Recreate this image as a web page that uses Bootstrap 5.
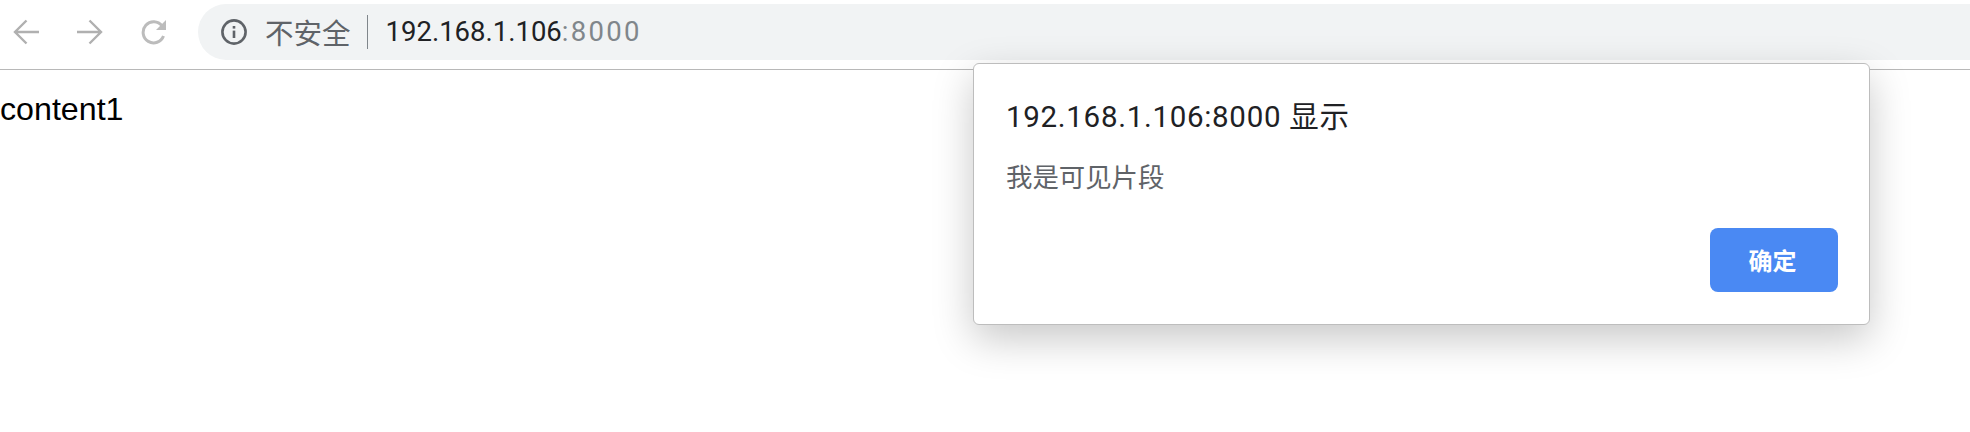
<!DOCTYPE html>
<html lang="zh-CN">
<head>
  <meta charset="UTF-8" />
  <title>192.168.1.106:8000</title>
  <link href="https://cdn.jsdelivr.net/npm/bootstrap@5.3.0/dist/css/bootstrap.min.css" rel="stylesheet">
  <style>
    body {
      font-family: "Liberation Sans", "Noto Sans CJK SC", sans-serif;
      color: #000;
      background: #fff;
      overflow: hidden;
      height: 432px;
    }
    .chrome-bar {
      height: 70px;
      padding-top: 4px;
      border-bottom: 1px solid #b8b8b8;
    }
    .nav-icons {
      width: 198px;
      height: 56px;
      padding-left: 13px;
      gap: 38px;
    }
    .omnibox {
      height: 56px;
      background: #f1f3f4;
      border-radius: 28px 0 0 28px;
      padding-left: 22px;
    }
    .not-secure {
      font-size: 28.5px;
      color: #5f6368;
      font-family: "Noto Sans CJK SC", sans-serif;
      margin-left: 17px;
      line-height: 1;
    }
    .omni-sep {
      width: 1px;
      height: 34px;
      background: #80868b;
      margin: 0 18px 0 16px;
    }
    .omni-url {
      font-family: Roboto, "Liberation Sans", sans-serif;
      font-size: 27.5px;
      color: #202124;
    }
    .omni-port { color: #80868b; letter-spacing: 2.3px; }
    .page-text {
      font-size: 32.2px;
      line-height: 37px;
      padding-top: 21px;
    }
    .js-alert {
      position: absolute;
      left: 973px;
      top: 63px;
      width: 897px;
      height: 262px;
      padding: 35px 31px 32px 32px;
      background: #fff;
      border: 1px solid #bdbdbd;
      border-radius: 6px;
      box-shadow: 0 14px 40px rgba(0, 0, 0, .22);
    }
    .alert-title {
      font-family: Roboto, "Noto Sans CJK SC", sans-serif;
      font-size: 29.5px;
      font-weight: 400;
      line-height: 36px;
      letter-spacing: .7px;
      color: #202124;
      margin: 0 0 24px;
    }
    .alert-msg {
      font-family: "Noto Sans CJK SC", sans-serif;
      font-size: 26.4px;
      line-height: 34px;
      color: #5f6368;
      margin: 0;
    }
    .alert-ok {
      width: 128px;
      height: 64px;
      padding: 0 3px 0 0;
      border: 0;
      border-radius: 8px;
      background: #4a89f3;
      font-family: "Noto Sans CJK SC", sans-serif;
      font-size: 24px;
      font-weight: 700;
    }
  </style>
</head>
<body>
  <div class="chrome-bar d-flex">
    <div class="nav-icons d-flex align-items-center">
      <svg width="26" height="26" viewBox="0 0 26 26" fill="none" stroke="#b0b0b0" stroke-width="2.4"><path d="M26 13H2M13.5 1.5L2 13l11.5 11.5"/></svg>
      <svg width="26" height="26" viewBox="0 0 26 26" fill="none" stroke="#b0b0b0" stroke-width="2.4"><path d="M0 13h24M12.5 1.5L24 13 12.5 24.5"/></svg>
      <svg width="26" height="26" viewBox="0 0 26 26" fill="none" stroke="#bcbcbc" stroke-width="3"><path d="M22.5 17a10.5 10.5 0 1 1-1.5-10"/><path d="M25 1v10h-10z" fill="#bcbcbc" stroke="none"/></svg>
    </div>
    <div class="omnibox flex-grow-1 d-flex align-items-center">
      <svg width="28" height="28" viewBox="0 0 28 28" fill="none"><circle cx="14" cy="14" r="11.6" stroke="#5f6368" stroke-width="2.6"/><rect x="12.7" y="12.6" width="2.6" height="7.4" fill="#5f6368"/><rect x="12.7" y="8" width="2.6" height="2.6" fill="#5f6368"/></svg>
      <span class="not-secure">不安全</span>
      <span class="omni-sep"></span>
      <span class="omni-url">192.168.1.106<span class="omni-port">:8000</span></span>
    </div>
  </div>
  <div class="page-text">content1</div>

  <div class="js-alert d-flex flex-column">
    <h1 class="alert-title">192.168.1.106:8000 显示</h1>
    <p class="alert-msg">我是可见片段</p>
    <div class="d-flex justify-content-end mt-auto">
      <button type="button" class="btn btn-primary alert-ok">确定</button>
    </div>
  </div>
  <script src="https://cdn.jsdelivr.net/npm/bootstrap@5.3.0/dist/js/bootstrap.bundle.min.js"></script>
</body>
</html>
